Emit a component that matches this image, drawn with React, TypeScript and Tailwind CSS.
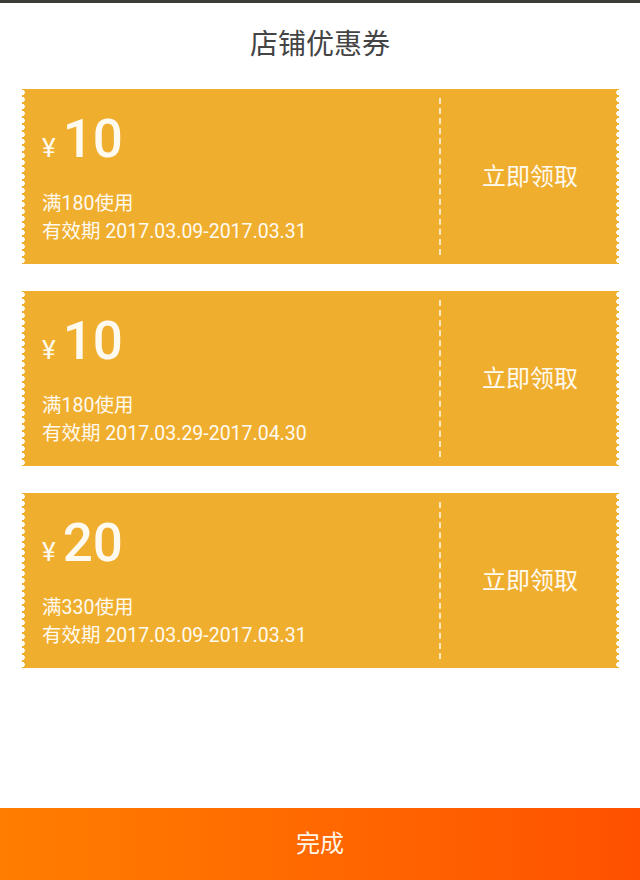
import React from 'react';

interface Coupon {
  id: number;
  amount: number;
  minSpend: number;
  start: string;
  end: string;
}

const coupons: Coupon[] = [
  { id: 1, amount: 10, minSpend: 180, start: '2017.03.09', end: '2017.03.31' },
  { id: 2, amount: 10, minSpend: 180, start: '2017.03.29', end: '2017.04.30' },
  { id: 3, amount: 20, minSpend: 330, start: '2017.03.09', end: '2017.03.31' },
];

function CouponCard({ coupon }: { coupon: Coupon }) {
  return (
    <div className="relative flex h-[175px] bg-[#f0ae2f] text-[#fffaf0]">
      {/* scalloped edges */}
      <div className="absolute left-0 top-0 h-full w-[3px] bg-[radial-gradient(circle_at_left,#fff_2.5px,transparent_3px)] bg-[length:3px_7px] bg-repeat-y" />
      <div className="absolute right-0 top-0 h-full w-[3px] bg-[radial-gradient(circle_at_right,#fff_2.5px,transparent_3px)] bg-[length:3px_7px] bg-repeat-y" />

      <div className="w-[417px] pl-[20px] pt-[24px]">
        <div className="flex items-baseline">
          <span className="text-[26px] leading-none mr-[7px]">¥</span>
          <span className="text-[53px] leading-[52px] font-medium">{coupon.amount}</span>
        </div>
        <div className="mt-[25px] text-[19.5px] leading-[28px]">
          <p>满{coupon.minSpend}使用</p>
          <p>
            有效期 {coupon.start}-{coupon.end}
          </p>
        </div>
      </div>

      <div className="my-[9px] border-l-2 border-dashed border-[#fde9c0]" />

      <div className="flex flex-1 items-center justify-center">
        <span className="text-[24px]">立即领取</span>
      </div>
    </div>
  );
}

export default function App() {
  return (
    <div
      className="flex h-[880px] w-[640px] flex-col bg-white"
      style={{ fontFamily: 'Roboto, "Noto Sans CJK SC", sans-serif' }}
    >
      <div className="h-[3px] bg-[#3b3b38]" />

      {/* Header */}
      <div className="flex h-[86px] items-center justify-center">
        <h1 className="text-[28px] text-[#444] pb-[2px]">店铺优惠券</h1>
      </div>

      {/* Coupon list */}
      <div className="flex flex-col gap-[27px] px-[22px] pr-[21px]">
        {coupons.map((c) => (
          <CouponCard key={c.id} coupon={c} />
        ))}
      </div>

      <div className="flex-1" />

      {/* Footer button */}
      <button className="flex h-[72px] items-center justify-center bg-gradient-to-r from-[#ff7d00] to-[#ff5000] text-[24px] text-[#fff5e6]">
        完成
      </button>
    </div>
  );
}
